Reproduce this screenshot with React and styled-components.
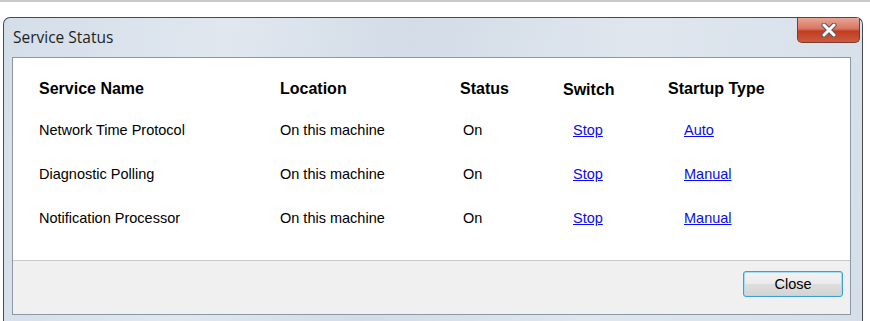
import React from 'react'
import styled, { createGlobalStyle } from 'styled-components'

const Global = createGlobalStyle`
  html, body { margin: 0; padding: 0; background: #ffffff; }
  body { font-family: "Liberation Sans", Arial, sans-serif; }
`

const Page = styled.div`
  height: 321px;
  box-sizing: border-box;
  border-top: 2px solid #cacaca;
  padding: 15px 0 0 3px;
  overflow: hidden;
`

const Window = styled.div`
  width: 860px;
  height: 304px;
  box-sizing: border-box;
  border: 1px solid #474b50;
  border-bottom: none;
  border-radius: 7px 7px 0 0;
  background: linear-gradient(100deg, #d4dee9 0%, #e0e7ef 25%, #d3dce7 45%, #dfe6ee 70%, #d6dfe9 100%);
  padding: 0 11px 6px 8px;
  display: flex;
  flex-direction: column;
`

const TitleBar = styled.div`
  height: 39px;
  display: flex;
  justify-content: space-between;
  align-items: flex-start;
  margin-right: -9px;
`

const Title = styled.div`
  font-family: "Open Sans", "Liberation Sans", sans-serif;
  font-size: 15.5px;
  color: #1e1e1e;
  line-height: 39px;
  padding-left: 1px;
`

const CloseX = styled.div`
  width: 63px;
  height: 25px;
  box-sizing: border-box;
  border: 1px solid #7b3b2e;
  border-top: none;
  border-radius: 0 0 5px 5px;
  background: linear-gradient(180deg, #e9a796 0%, #d87461 45%, #c23d22 55%, #cc5a3e 100%);
  display: flex;
  align-items: center;
  justify-content: center;
`

const Client = styled.div`
  flex: 1;
  display: flex;
  flex-direction: column;
  border: 1px solid #8b98a6;
  background: #ffffff;
`

const Table = styled.div`
  flex: 1;
  display: grid;
  grid-template-columns: 241px 180px 103px 105px 1fr;
  grid-template-rows: 39px repeat(3, 44px);
  align-items: center;
  padding: 11px 0 0 26px;
`

const Head = styled.div`
  font-weight: bold;
  font-size: 16px;
  color: #000;
  padding-top: ${p => p.$down || 0}px;
`

const Cell = styled.div`
  font-size: 14.5px;
  color: #000;
  padding-left: ${p => p.$indent || 0}px;
`

const Link = styled.a`
  font-size: 14.5px;
  color: #0b0bf0;
  text-decoration: underline;
  cursor: pointer;
`

const Footer = styled.div`
  height: 54px;
  border-top: 1px solid #c9c9c9;
  background: #f0f0f0;
  display: flex;
  justify-content: flex-end;
  align-items: flex-start;
  padding: 10px 7px 0 0;
  box-sizing: border-box;
`

const Button = styled.button`
  width: 100px;
  height: 26px;
  border: 1px solid #3c9fd6;
  border-radius: 3px;
  box-shadow: inset 0 0 0 1px #a8dcf5;
  background: linear-gradient(180deg, #f3f3f3 0%, #ebebeb 48%, #dddddd 52%, #d4d4d4 100%);
  font-family: "Liberation Sans", Arial, sans-serif;
  font-size: 14.5px;
  color: #000;
  padding: 0;
`

const services = [
  { name: 'Network Time Protocol', startup: 'Auto' },
  { name: 'Diagnostic Polling', startup: 'Manual' },
  { name: 'Notification Processor', startup: 'Manual' },
]

export default function App() {
  return (
    <Page>
      <Global />
      <Window>
        <TitleBar>
          <Title>Service Status</Title>
          <CloseX>
            <svg width="18" height="14" viewBox="0 0 18 14">
              <path d="M4 2 L14 12 M14 2 L4 12" stroke="#5a5a5a" strokeWidth="5" strokeLinecap="round" />
              <path d="M4 2 L14 12 M14 2 L4 12" stroke="#ffffff" strokeWidth="3" strokeLinecap="round" />
            </svg>
          </CloseX>
        </TitleBar>
        <Client>
          <Table>
            <Head>Service Name</Head>
            <Head>Location</Head>
            <Head>Status</Head>
            <Head $down={2}>Switch</Head>
            <Head>Startup Type</Head>
            {services.map(s => (
              <React.Fragment key={s.name}>
                <Cell>{s.name}</Cell>
                <Cell>On this machine</Cell>
                <Cell $indent={3}>On</Cell>
                <Cell $indent={10}><Link>Stop</Link></Cell>
                <Cell $indent={16}><Link>{s.startup}</Link></Cell>
              </React.Fragment>
            ))}
          </Table>
          <Footer>
            <Button>Close</Button>
          </Footer>
        </Client>
      </Window>
    </Page>
  )
}
